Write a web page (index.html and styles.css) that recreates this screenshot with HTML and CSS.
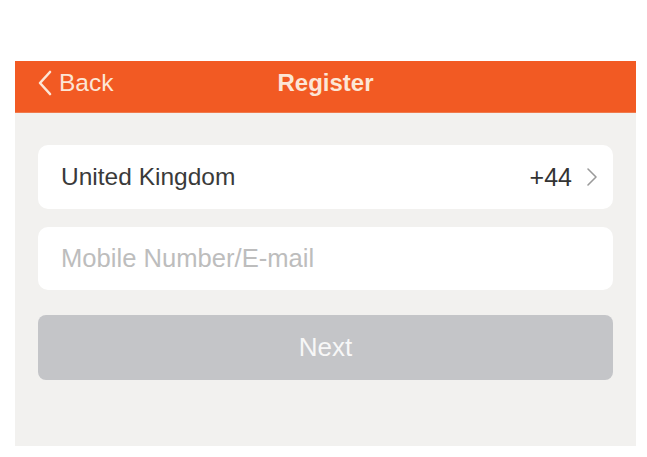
FILE: index.html
```html
<!DOCTYPE html>
<html>
<head>
<meta charset="utf-8">
<link rel="stylesheet" href="styles.css">
</head>
<body>
<div class="app">
  <header class="nav">
    <div class="back">
      <svg class="back-icon" width="16" height="26" viewBox="0 0 16 26"><path d="M13 2 L3 13 L13 24" fill="none" stroke="currentColor" stroke-width="2.6" stroke-linecap="round" stroke-linejoin="round"/></svg>
      <span>Back</span>
    </div>
    <div class="title">Register</div>
  </header>
  <main class="panel">
    <div class="card country">
      <span class="country-name">United Kingdom</span>
      <span class="code">+44</span>
      <svg class="chev" width="12" height="20" viewBox="0 0 12 20"><path d="M2 2 L10 10 L2 18" fill="none" stroke="currentColor" stroke-width="1.6" stroke-linecap="round" stroke-linejoin="round"/></svg>
    </div>
    <div class="card input">
      <span class="placeholder">Mobile Number/E-mail</span>
    </div>
    <div class="btn">Next</div>
  </main>
</div>
</body>
</html>
```

FILE: styles.css
```css
html, body {
  margin: 0;
  padding: 0;
  background: #ffffff;
}
body {
  font-family: "Liberation Sans", Arial, sans-serif;
}
.app {
  margin: 61px 0 0 15px;
  width: 621px;
}
.nav {
  height: 52px;
  background: #f25a23;
  position: relative;
  display: flex;
  align-items: center;
  color: #fce6d6;
  border-bottom: 1px solid #f07a4c;
  box-sizing: border-box;
}
.back {
  display: flex;
  align-items: center;
  margin-left: 22px;
  font-size: 24.5px;
  gap: 6px;
  margin-top: -7px;
}
.back-icon {
  display: block;
}
.title {
  position: absolute;
  left: 0;
  right: 0;
  top: 0;
  bottom: 0;
  display: flex;
  align-items: center;
  justify-content: center;
  font-size: 24px;
  font-weight: bold;
  margin-top: -7px;
  pointer-events: none;
}
.panel {
  background: #f2f1ef;
  padding: 32px 23px 66px;
  display: flex;
  flex-direction: column;
}
.card {
  background: #ffffff;
  border-radius: 10px;
  display: flex;
  align-items: center;
  padding: 0 15px 0 23px;
  font-size: 24.5px;
}
.country {
  height: 64px;
  color: #3a3a3a;
}
.country-name {
  flex: 1;
}
.code {
  color: #333333;
  font-size: 25px;
}
.chev {
  color: #9a9a9a;
  margin-left: 14px;
}
.input {
  margin-top: 18px;
  height: 63px;
}
.placeholder {
  color: #bdbdbd;
  font-size: 25.6px;
}
.btn {
  margin-top: 25px;
  height: 65px;
  border-radius: 8px;
  background: #c4c5c8;
  color: #f7f7f7;
  font-size: 26px;
  display: flex;
  align-items: center;
  justify-content: center;
}
```
